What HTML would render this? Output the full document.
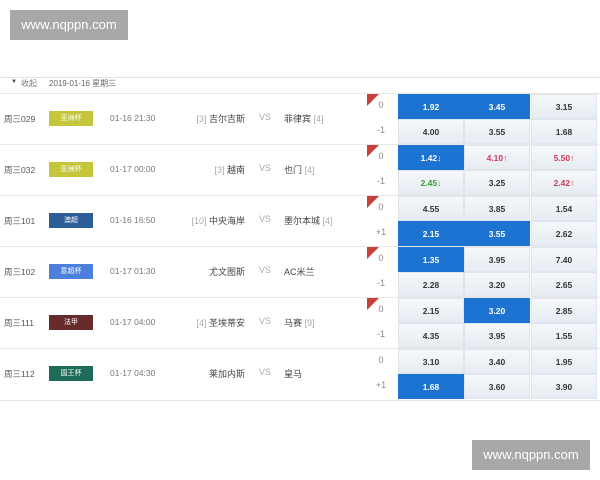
<!DOCTYPE html>
<html><head><meta charset="utf-8"><style>
body{margin:0;width:600px;height:480px;background:#fff;position:relative;overflow:hidden;font-family:"Liberation Sans","Noto Sans CJK SC",sans-serif;font-size:8px;color:#555}
.a{position:absolute;white-space:nowrap}
.wm{position:absolute;background:#a8a8a8;color:#fff;font-size:13px;text-align:center;line-height:30px}
.row{position:absolute;left:0;width:600px;height:51px;border-top:1px solid #e8e8e8}
.id{left:4px;top:19px;color:#555;font-size:8.5px}
.bd{left:49px;top:17px;width:44px;height:15px;line-height:15px;text-align:center;color:#fff;font-size:7px}
.tm{left:110px;top:19px;color:#777;font-size:8.5px}
.home{right:355px;top:18px;font-size:9px;color:#444}
.vs{left:259px;top:18px;color:#aaa;font-size:9px}
.away{left:284px;top:18px;font-size:9px;color:#444}
.g{color:#aaa}
.hc{left:374px;width:14px;text-align:center;font-size:9px;color:#888}
.flag{left:367px;top:0;width:0;height:0;border-top:12px solid #c9403a;border-right:12px solid transparent}
.c{position:absolute;width:66px;height:25px;line-height:24px;text-align:center;font-size:8.5px;font-weight:bold;color:#333;background:linear-gradient(#f5f8fb,#e6ecf2);border:1px solid #dfe5ec;box-sizing:border-box}
.b{background:#1c73d2;color:#fff;border-color:#1c73d2}
.r{color:#d23a5a}.gr{color:#3a9a3a}
</style></head><body>
<div class="wm" style="left:10px;top:10px;width:118px;height:30px">www.nqppn.com</div>
<div class="wm" style="left:472px;top:440px;width:118px;height:30px">www.nqppn.com</div>
<div class="a" style="left:0;top:77px;width:600px;border-top:1px solid #e4e4e4"></div>
<div class="a" style="left:11px;top:79px;font-size:6px;color:#446">▼</div>
<div class="a" style="left:21px;top:78px;color:#777">收起</div>
<div class="a" style="left:49px;top:78px;color:#666">2019-01-16 星期三</div>

<div class="row" style="top:93px">
<div class="a id">周三029</div><div class="a bd" style="background:#c4c63c">亚洲杯</div><div class="a tm">01-16 21:30</div>
<div class="a home"><span class="g">[3]</span> 吉尔吉斯</div><div class="a vs">VS</div><div class="a away">菲律宾 <span class="g">[4]</span></div>
<div class="a flag"></div><div class="a hc" style="top:6px">0</div><div class="a hc" style="top:31px">-1</div>
<div class="c b" style="left:398px;top:0">1.92</div><div class="c b" style="left:464px;top:0">3.45</div><div class="c" style="left:531px;top:0">3.15</div>
<div class="c" style="left:398px;top:25px">4.00</div><div class="c" style="left:464px;top:25px">3.55</div><div class="c" style="left:531px;top:25px">1.68</div>
</div>

<div class="row" style="top:144px">
<div class="a id">周三032</div><div class="a bd" style="background:#c4c63c">亚洲杯</div><div class="a tm">01-17 00:00</div>
<div class="a home"><span class="g">[3]</span> 越南</div><div class="a vs">VS</div><div class="a away">也门 <span class="g">[4]</span></div>
<div class="a flag"></div><div class="a hc" style="top:6px">0</div><div class="a hc" style="top:31px">-1</div>
<div class="c b" style="left:398px;top:0">1.42↓</div><div class="c r" style="left:464px;top:0">4.10↑</div><div class="c r" style="left:531px;top:0">5.50↑</div>
<div class="c gr" style="left:398px;top:25px">2.45↓</div><div class="c" style="left:464px;top:25px">3.25</div><div class="c r" style="left:531px;top:25px">2.42↑</div>
</div>

<div class="row" style="top:195px">
<div class="a id">周三101</div><div class="a bd" style="background:#2d5e98">澳超</div><div class="a tm">01-16 16:50</div>
<div class="a home"><span class="g">[10]</span> 中央海岸</div><div class="a vs">VS</div><div class="a away">墨尔本城 <span class="g">[4]</span></div>
<div class="a flag"></div><div class="a hc" style="top:6px">0</div><div class="a hc" style="top:31px">+1</div>
<div class="c" style="left:398px;top:0">4.55</div><div class="c" style="left:464px;top:0">3.85</div><div class="c" style="left:531px;top:0">1.54</div>
<div class="c b" style="left:398px;top:25px">2.15</div><div class="c b" style="left:464px;top:25px">3.55</div><div class="c" style="left:531px;top:25px">2.62</div>
</div>

<div class="row" style="top:246px">
<div class="a id">周三102</div><div class="a bd" style="background:#4d7fdc">意超杯</div><div class="a tm">01-17 01:30</div>
<div class="a home">尤文图斯</div><div class="a vs">VS</div><div class="a away">AC米兰</div>
<div class="a flag"></div><div class="a hc" style="top:6px">0</div><div class="a hc" style="top:31px">-1</div>
<div class="c b" style="left:398px;top:0">1.35</div><div class="c" style="left:464px;top:0">3.95</div><div class="c" style="left:531px;top:0">7.40</div>
<div class="c" style="left:398px;top:25px">2.28</div><div class="c" style="left:464px;top:25px">3.20</div><div class="c" style="left:531px;top:25px">2.65</div>
</div>

<div class="row" style="top:297px">
<div class="a id">周三111</div><div class="a bd" style="background:#672b2b">法甲</div><div class="a tm">01-17 04:00</div>
<div class="a home"><span class="g">[4]</span> 圣埃蒂安</div><div class="a vs">VS</div><div class="a away">马赛 <span class="g">[9]</span></div>
<div class="a flag"></div><div class="a hc" style="top:6px">0</div><div class="a hc" style="top:31px">-1</div>
<div class="c" style="left:398px;top:0">2.15</div><div class="c b" style="left:464px;top:0">3.20</div><div class="c" style="left:531px;top:0">2.85</div>
<div class="c" style="left:398px;top:25px">4.35</div><div class="c" style="left:464px;top:25px">3.95</div><div class="c" style="left:531px;top:25px">1.55</div>
</div>

<div class="row" style="top:348px;border-bottom:1px solid #e4e4e4">
<div class="a id">周三112</div><div class="a bd" style="background:#1d6b58">国王杯</div><div class="a tm">01-17 04:30</div>
<div class="a home">莱加内斯</div><div class="a vs">VS</div><div class="a away">皇马</div>
<div class="a hc" style="top:6px">0</div><div class="a hc" style="top:31px">+1</div>
<div class="c" style="left:398px;top:0">3.10</div><div class="c" style="left:464px;top:0">3.40</div><div class="c" style="left:531px;top:0">1.95</div>
<div class="c b" style="left:398px;top:25px">1.68</div><div class="c" style="left:464px;top:25px">3.60</div><div class="c" style="left:531px;top:25px">3.90</div>
</div>
</body></html>
